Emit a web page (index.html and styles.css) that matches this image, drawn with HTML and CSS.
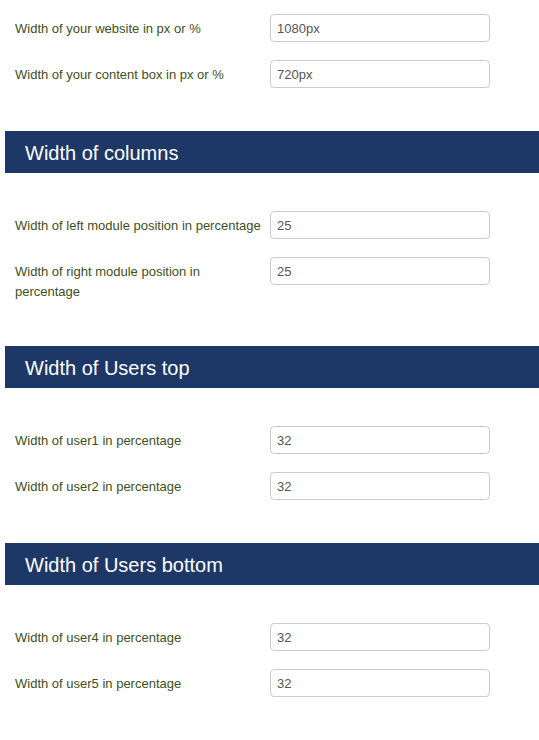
FILE: index.html
```html
<!DOCTYPE html>
<html lang="en">
<head>
    <meta charset="utf-8">
    <title>Template Widths</title>
    <link rel="stylesheet" href="styles.css">
</head>
<body>
    <div class="params">
        <div class="fields first">
            <div class="control-group">
                <label class="control-label">Width of your website in px or %</label>
                <input type="text" name="site_width" value="1080px">
            </div>
            <div class="control-group">
                <label class="control-label">Width of your content box in px or %</label>
                <input type="text" name="content_width" value="720px">
            </div>
        </div>

        <h2 class="spacer">Width of columns</h2>
        <div class="fields">
            <div class="control-group">
                <label class="control-label">Width of left module position in percentage</label>
                <input type="text" name="left_width" value="25">
            </div>
            <div class="control-group">
                <label class="control-label">Width of right module position in percentage</label>
                <input type="text" name="right_width" value="25">
            </div>
        </div>

        <h2 class="spacer">Width of Users top</h2>
        <div class="fields">
            <div class="control-group">
                <label class="control-label">Width of user1 in percentage</label>
                <input type="text" name="user1_width" value="32">
            </div>
            <div class="control-group">
                <label class="control-label">Width of user2 in percentage</label>
                <input type="text" name="user2_width" value="32">
            </div>
        </div>

        <h2 class="spacer">Width of Users bottom</h2>
        <div class="fields">
            <div class="control-group">
                <label class="control-label">Width of user4 in percentage</label>
                <input type="text" name="user4_width" value="32">
            </div>
            <div class="control-group">
                <label class="control-label">Width of user5 in percentage</label>
                <input type="text" name="user5_width" value="32">
            </div>
        </div>
    </div>
</body>
</html>
```

FILE: styles.css
```css
/* template parameter screen */
:root {
--clr-white: rgb(255, 255, 255);
--clr-navy: rgb(29, 55, 103);
--clr-olive: rgb(64, 80, 28);
--clr-border: rgb(204, 204, 204);
--clr-input-text: rgb(85, 85, 85);
}
body {
    font-family: "Liberation Sans", Arial, sans-serif;
    background-color: var(--clr-white);
    margin: 0;
    padding: 0;
}
.params {
    margin-left: 5px;
}
.fields {
    padding: 38px 0 25px 10px;
}
.fields.first {
    padding-top: 14px;
}
.control-group {
    display: flex;
    align-items: flex-start;
    margin-bottom: 18px;
}
.control-label {
    box-sizing: border-box;
    width: 255px;
    padding: 5px 6px 1px 0;
    font-size: 13px;
    line-height: 20px;
    color: var(--clr-olive);
}
input[type="text"] {
    box-sizing: border-box;
    width: 220px;
    height: 28px;
    margin: 0;
    padding: 0 6px;
    border: 1px solid var(--clr-border);
    border-radius: 4px;
    font-family: "Liberation Sans", Arial, sans-serif;
    font-size: 13px;
    color: var(--clr-input-text);
    background: var(--clr-white);
}
.spacer {
    margin: 0;
    height: 42px;
    padding-left: 20px;
    background-color: var(--clr-navy);
    color: var(--clr-white);
    font-size: 20px;
    font-weight: normal;
    line-height: 44px;
}
```
